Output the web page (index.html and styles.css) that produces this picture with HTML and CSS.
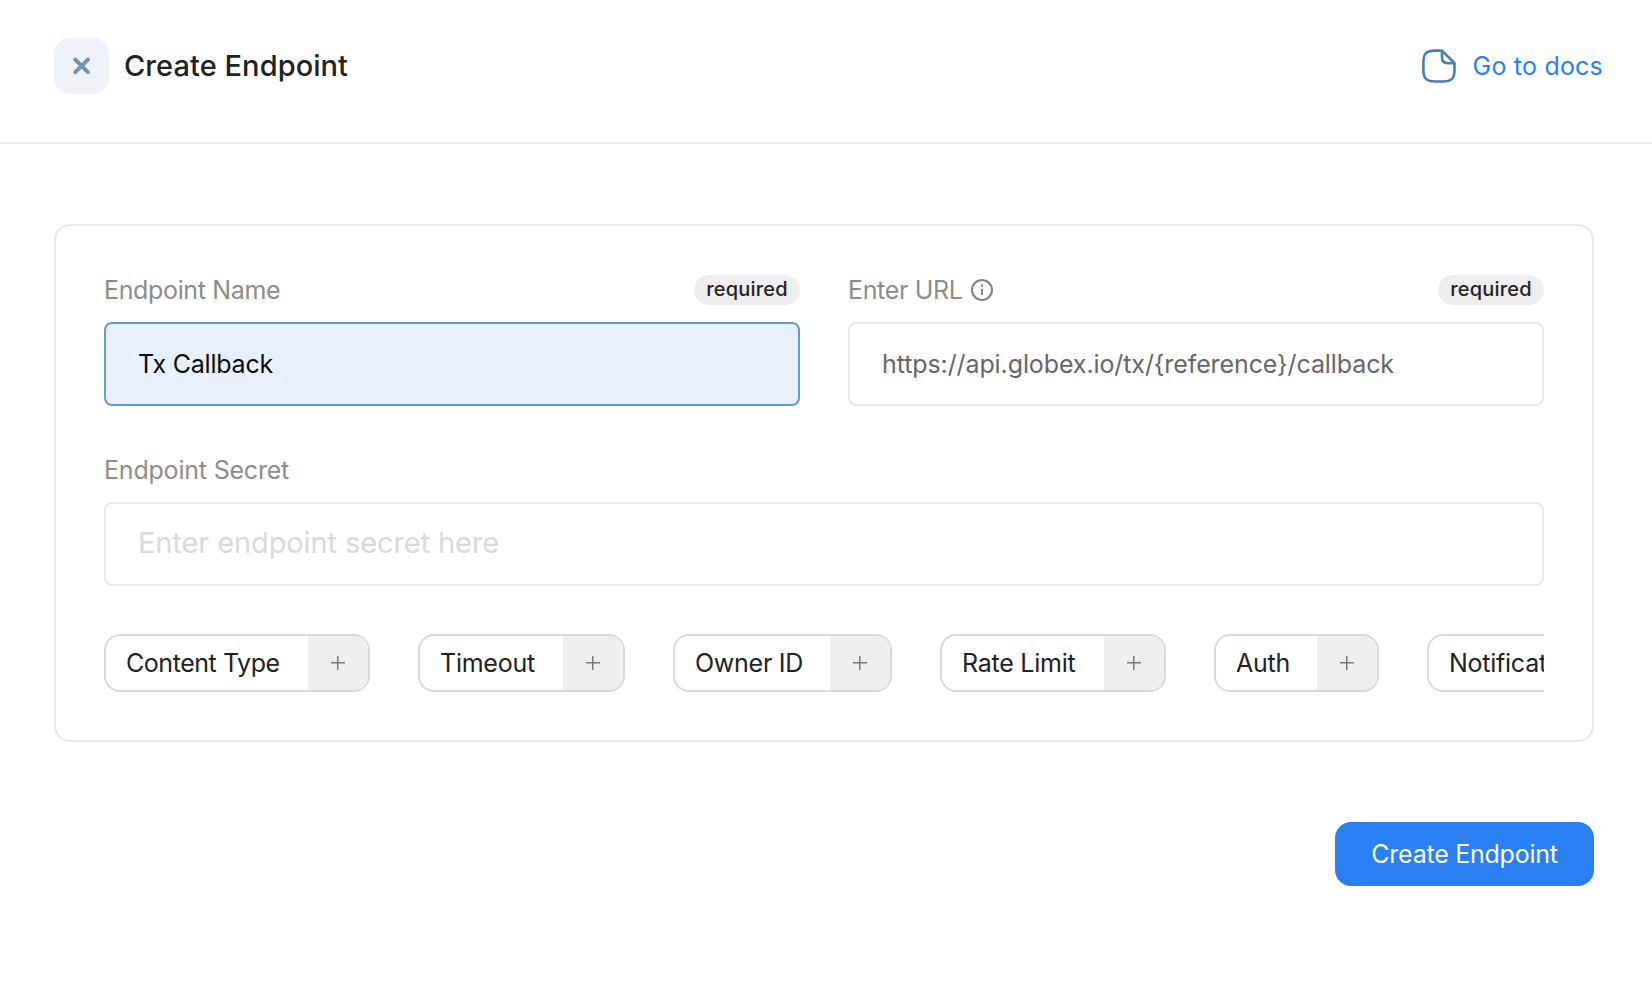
FILE: index.html
```html
<!DOCTYPE html>
<html lang="en">
<head>
  <meta charset="UTF-8" />
  <meta name="viewport" content="width=device-width, initial-scale=1.0"/>
  <title>Create Endpoint</title>
  <link rel="stylesheet" href="styles.css">
</head>
<body>

  <header class="header">
    <div class="header-left">
      <button class="close-btn" type="button" aria-label="Close">
        <svg width="18" height="18" viewBox="0 0 18 18" fill="none" stroke="#7590b5" stroke-width="4" stroke-linecap="round">
          <path d="M2.300 2.600L14.900 15.200M14.900 2.600L2.300 15.200"/>
        </svg>
      </button>
      <h1 class="title">Create Endpoint</h1>
    </div>
    <a class="docs-link" href="#">
      <svg width="34" height="34" viewBox="0 0 34 34" fill="none" stroke="#477db3" stroke-width="2.6" stroke-linejoin="round">
        <path d="M20 1.600H13C4.500 1.600 1.400 4.500 1.400 13V21C1.400 29.500 4.500 32.500 13 32.500H21C29.500 32.500 32.500 29.500 32.500 21V14.200Z"/>
        <path d="M20 1.600V8.500C20 12.700 21.800 14.200 26 14.200H32.500"/>
      </svg>
      <span>Go to docs</span>
    </a>
  </header>

  <main class="content">
    <form class="card">
      <div class="row">
        <div class="field">
          <div class="field-head">
            <label class="label" for="name">Endpoint Name</label>
            <span class="badge">required</span>
          </div>
          <input class="input input-filled" id="name" type="text" value="Tx Callback">
        </div>
        <div class="field">
          <div class="field-head">
            <label class="label" for="url">
              Enter URL
              <svg width="22" height="22" viewBox="0 0 22 22" fill="none" stroke="#828282" stroke-width="2">
                <circle cx="11" cy="11" r="10"/>
                <path d="M11 9.800V16M11 5.600V7.800"/>
              </svg>
            </label>
            <span class="badge">required</span>
          </div>
          <input class="input input-url" id="url" type="text" placeholder="https://api.globex.io/tx/{reference}/callback">
        </div>
      </div>

      <div class="field">
        <div class="field-head">
          <label class="label label-secret" for="secret">Endpoint Secret</label>
        </div>
        <input class="input input-secret" id="secret" type="text" placeholder="Enter endpoint secret here">
      </div>

      <div class="options">
        <button class="option content-type" type="button"><span class="option-name">Content Type</span><span class="option-add"><i class="plus"></i></span></button>
        <button class="option timeout" type="button"><span class="option-name">Timeout</span><span class="option-add"><i class="plus"></i></span></button>
        <button class="option owner" type="button"><span class="option-name">Owner ID</span><span class="option-add"><i class="plus"></i></span></button>
        <button class="option rate" type="button"><span class="option-name">Rate Limit</span><span class="option-add"><i class="plus"></i></span></button>
        <button class="option auth" type="button"><span class="option-name">Auth</span><span class="option-add"><i class="plus"></i></span></button>
        <button class="option notification" type="button"><span class="option-name">Notification</span><span class="option-add"><i class="plus"></i></span></button>
      </div>
    </form>

    <div class="actions">
      <button class="submit-btn" type="submit">Create Endpoint</button>
    </div>
  </main>

</body>
</html>
```
FILE: styles.css
```css
* {
  box-sizing: border-box;
}
body {
  margin: 0;
  background-color: #fff;
  color: #202223;
  font-family: Inter, "Liberation Sans", sans-serif;
  font-size: 25px;
}
button, input {
  font: inherit;
  color: inherit;
}
button {
  padding: 0;
  border: none;
  cursor: pointer;
}
.header {
  display: flex;
  justify-content: space-between;
  align-items: flex-start;
  height: 144px;
  padding: 38px 49px 0 54px;
  border-bottom: 2px solid #e8e8e8;
}
.header-left {
  display: flex;
  align-items: center;
  gap: 15px;
}
.close-btn {
  display: flex;
  align-items: center;
  justify-content: center;
  width: 55px;
  height: 56px;
  border-radius: 16px;
  background-color: #edf2f8;
}
.title {
  margin: 0;
  padding-bottom: 2px;
  font-size: 29px;
  font-weight: 500;
  letter-spacing: 0.07px;
  white-space: nowrap;
}
.docs-link {
  display: flex;
  align-items: center;
  gap: 17px;
  height: 56px;
  color: #2a80f2;
  letter-spacing: 0.2px;
  text-decoration: none;
  white-space: nowrap;
}
.content {
  padding: 80px 58px 0 54px;
}
.card {
  display: flex;
  flex-direction: column;
  gap: 48px;
  height: 518px;
  padding: 48px;
  border: 2px solid #e8e8e8;
  border-radius: 16px;
}
.row {
  display: grid;
  grid-template-columns: 1fr 1fr;
  gap: 48px;
}
.field {
  display: flex;
  flex-direction: column;
  gap: 16px;
}
.field-head {
  display: flex;
  justify-content: space-between;
  align-items: center;
  height: 32px;
}
.label {
  display: flex;
  align-items: center;
  gap: 9px;
  color: #8c8c8c;
  letter-spacing: -0.35px;
  white-space: nowrap;
}
.label-secret {
  letter-spacing: -0.2px;
}
.badge {
  width: 106px;
  height: 30px;
  border-radius: 15px;
  background-color: #eee;
  font-size: 20px;
  font-weight: 500;
  letter-spacing: 0.2px;
  line-height: 29px;
  text-align: center;
}
.input {
  width: 100%;
  height: 84px;
  padding: 0 32px;
  border: 2px solid #e8e8e8;
  border-radius: 8px;
  background-color: #fff;
  letter-spacing: -0.1px;
  outline: none;
}
.input-filled {
  border-color: #6699cf;
  background-color: #e8effd;
  color: #0b0b0b;
  letter-spacing: -0.2px;
}
.input-url::placeholder {
  color: #666;
}
.input-secret {
  padding-bottom: 4px;
  font-size: 29px;
}
.input-secret::placeholder {
  color: #d9d9d9;
}
.options {
  display: flex;
  gap: 48px;
  overflow: hidden;
}
.option {
  display: flex;
  flex: none;
  height: 58px;
  border: 2px solid #d9d9d9;
  border-radius: 16px;
  background-color: #fff;
  overflow: hidden;
}
.option-name {
  flex: 1;
  padding-left: 20px;
  letter-spacing: -0.25px;
  line-height: 54px;
  text-align: left;
  white-space: nowrap;
}
.option-add {
  display: flex;
  align-items: center;
  justify-content: center;
  width: 60px;
  height: 54px;
  background-color: #eee;
}
.plus {
  width: 14px;
  height: 14px;
  background: linear-gradient(#777, #777) center / 14px 1.5px no-repeat,
    linear-gradient(#777, #777) center / 1.5px 14px no-repeat;
}
.content-type { width: 266px; }
.content-type .option-name { letter-spacing: -0.45px; }
.timeout { width: 207px; }
.owner { width: 219px; }
.rate { width: 226px; }
.auth { width: 165px; }
.notification { width: 250px; }
.actions {
  display: flex;
  justify-content: flex-end;
  margin-top: 80px;
}
.submit-btn {
  width: 259px;
  height: 64px;
  border-radius: 16px;
  background-color: #2a80f2;
  color: #fff;
  letter-spacing: -0.25px;
}
```
